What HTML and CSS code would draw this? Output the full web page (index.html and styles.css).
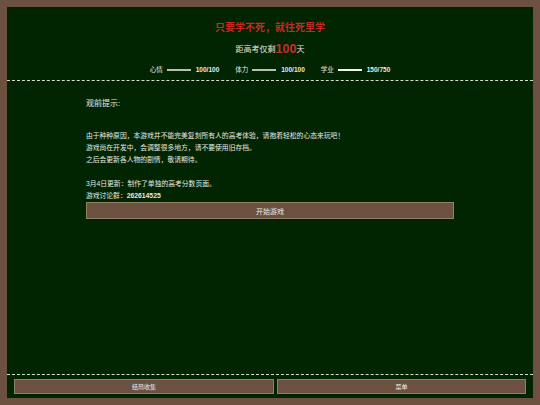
FILE: index.html
```html
<!DOCTYPE html>
<html lang="zh-CN">
<head>
<meta charset="utf-8">
<title>只要学不死，就往死里学</title>
<link rel="stylesheet" href="styles.css">
</head>
<body>
<div class="screen">
  <header class="top">
    <h1 class="slogan">只要学不死，就往死里学</h1>
    <div class="countdown">距高考仅剩<span class="days">100</span>天</div>
    <div class="stats">
      <div class="stat"><span class="stat-name">心情</span><span class="bar"></span><span class="stat-val">100/100</span></div>
      <div class="stat"><span class="stat-name">体力</span><span class="bar"></span><span class="stat-val">100/100</span></div>
      <div class="stat"><span class="stat-name">学业</span><span class="bar bar-bright"></span><span class="stat-val">150/750</span></div>
    </div>
  </header>
  <main class="body">
    <div class="notice">
      <p class="notice-title">观前提示:</p>
      <div class="notice-text">
        <p>由于种种原因，本游戏并不能完美复刻所有人的高考体验，请抱着轻松的心态来玩吧！</p>
        <p>游戏尚在开发中，会调整很多地方，请不要使用旧存档。</p>
        <p>之后会更新各人物的剧情，敬请期待。</p>
      </div>
      <div class="notice-text news">
        <p>3月4日更新：制作了单独的高考分数页面。</p>
        <p>游戏讨论群：<b>262614525</b></p>
      </div>
      <button class="btn btn-start">开始游戏</button>
    </div>
  </main>
  <footer class="bottom">
    <button class="btn btn-small btn-ending">结局收集</button>
    <button class="btn btn-small">菜单</button>
  </footer>
</div>
</body>
</html>
```

FILE: styles.css
```css
* {
  box-sizing: border-box;
}

html, body {
  margin: 0;
  padding: 0;
}

body {
  background: #6c5141;
  font-family: "Liberation Sans", "Noto Sans CJK SC", sans-serif;
  color: #e6e8e2;
  width: 540px;
  height: 405px;
  overflow: hidden;
}

p {
  margin: 0;
}

.screen {
  margin: 7px;
  height: 391px;
  background: #012501;
  display: flex;
  flex-direction: column;
}

/* header: slogan, countdown, status bars */
.top {
  padding-top: 14px;
  padding-bottom: 5px;
  border-bottom: 1px dashed #d8dccf;
  text-align: center;
}

.slogan {
  margin: 0;
  font-size: 10px;
  line-height: 14px;
  font-weight: bold;
  color: #c42a22;
}

.countdown {
  margin-top: 7px;
  font-size: 8px;
  line-height: 14px;
  height: 14px;
}

.days {
  font-size: 12.5px;
  font-weight: bold;
  color: #cc2c26;
  vertical-align: -1px;
}

.stats {
  margin-top: 9px;
  display: flex;
  justify-content: center;
  gap: 16px;
  font-size: 6.5px;
  line-height: 10px;
}

.stat {
  display: flex;
  align-items: center;
  gap: 4px;
}

.stat-val {
  margin-left: 1px;
  font-weight: bold;
  color: #e8ebe6;
}

.bar {
  display: block;
  width: 24px;
  height: 2px;
  background: #b9bfb4;
}

.bar-bright {
  background: #f2f2f2;
}

/* main notice area */
.body {
  flex: 1;
}

.notice {
  width: 70%;
  margin: 0 auto;
  padding-top: 17px;
}

.notice-title {
  font-size: 8px;
  line-height: 12px;
}

.notice-text {
  margin-top: 20px;
  font-size: 6.8px;
  line-height: 12px;
}

.news {
  margin-top: 12px;
}

.btn {
  display: block;
  background: #6c5141;
  border: 1px solid #8e8361;
  color: #eceae4;
  font-family: inherit;
  padding: 0;
  cursor: pointer;
}

.btn-start {
  width: 100%;
  height: 17px;
  margin-top: 0;
  font-size: 7px;
}

/* footer buttons */
.bottom {
  border-top: 1px dashed #d8dccf;
  padding: 4px 7px 4px;
  display: grid;
  grid-template-columns: 260px 1fr;
  gap: 3px;
}

.btn-small {
  height: 15px;
  font-size: 6px;
}
```
